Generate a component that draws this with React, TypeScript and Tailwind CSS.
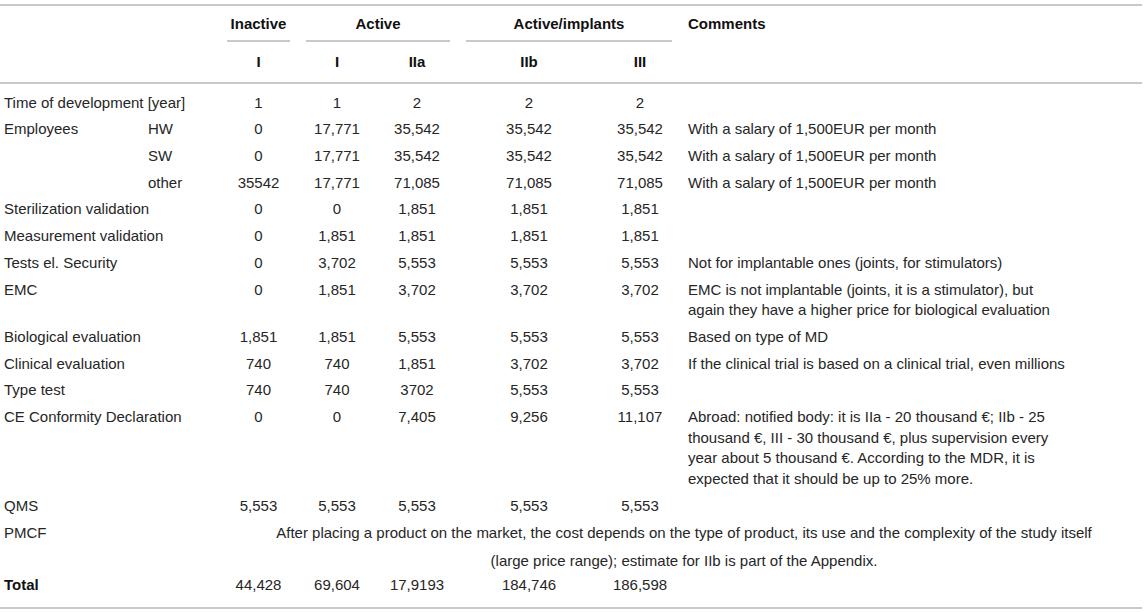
import React from "react";

const font = { fontFamily: '"Liberation Sans", Arial, Helvetica, sans-serif' };

type Row = {
  label: string;
  sub?: string;
  vals: string[];
  comment?: string[];
};

const rows: Row[] = [
  { label: "Time of development [year]", vals: ["1", "1", "2", "2", "2"] },
  { label: "Employees", sub: "HW", vals: ["0", "17,771", "35,542", "35,542", "35,542"], comment: ["With a salary of 1,500EUR per month"] },
  { label: "", sub: "SW", vals: ["0", "17,771", "35,542", "35,542", "35,542"], comment: ["With a salary of 1,500EUR per month"] },
  { label: "", sub: "other", vals: ["35542", "17,771", "71,085", "71,085", "71,085"], comment: ["With a salary of 1,500EUR per month"] },
  { label: "Sterilization validation", vals: ["0", "0", "1,851", "1,851", "1,851"] },
  { label: "Measurement validation", vals: ["0", "1,851", "1,851", "1,851", "1,851"] },
  { label: "Tests el. Security", vals: ["0", "3,702", "5,553", "5,553", "5,553"], comment: ["Not for implantable ones (joints, for stimulators)"] },
  {
    label: "EMC",
    vals: ["0", "1,851", "3,702", "3,702", "3,702"],
    comment: ["EMC is not implantable (joints, it is a stimulator), but", "again they have a higher price for biological evaluation"],
  },
  { label: "Biological evaluation", vals: ["1,851", "1,851", "5,553", "5,553", "5,553"], comment: ["Based on type of MD"] },
  { label: "Clinical evaluation", vals: ["740", "740", "1,851", "3,702", "3,702"], comment: ["If the clinical trial is based on a clinical trial, even millions"] },
  { label: "Type test", vals: ["740", "740", "3702", "5,553", "5,553"] },
  {
    label: "CE Conformity Declaration",
    vals: ["0", "0", "7,405", "9,256", "11,107"],
    comment: [
      "Abroad: notified body: it is IIa - 20 thousand €; IIb - 25",
      "thousand €, III - 30 thousand €, plus supervision every",
      "year about 5 thousand €. According to the MDR, it is",
      "expected that it should be up to 25% more.",
    ],
  },
  { label: "QMS", vals: ["5,553", "5,553", "5,553", "5,553", "5,553"] },
];

const cell = "align-top py-[3px] leading-[20.7px]";
const line = "border-[#c9c9c9]";

export default function App() {
  return (
    <div className="bg-white w-[1146px] h-[612px] overflow-hidden text-[15px] text-[#262626]" style={font}>
      <table className="mt-[4px] w-[1142px] table-fixed border-separate border-spacing-0">
        <colgroup>
          <col className="w-[140px]" />
          <col className="w-[79px]" />
          <col className="w-[79px]" />
          <col className="w-[78px]" />
          <col className="w-[82px]" />
          <col className="w-[142px]" />
          <col className="w-[80px]" />
          <col className="w-[462px]" />
        </colgroup>
        <thead className="font-bold text-[#111]">
          <tr>
            <th colSpan={2} className={`border-t-2 ${line}`}></th>
            <th className={`border-t-2 ${line} px-2 pt-[8px] align-top`}>
              <div className={`leading-[20px] pb-[6px] border-b-2 ${line}`}>Inactive</div>
            </th>
            <th colSpan={2} className={`border-t-2 ${line} px-2 pt-[8px] align-top`}>
              <div className={`leading-[20px] pb-[6px] border-b-2 ${line}`}>Active</div>
            </th>
            <th colSpan={2} className={`border-t-2 ${line} px-2 pt-[8px] align-top`}>
              <div className={`leading-[20px] pb-[6px] border-b-2 ${line}`}>Active/implants</div>
            </th>
            <th className={`border-t-2 ${line} pl-2 pt-[8px] align-top text-left`}>
              <div className="leading-[20px]">Comments</div>
            </th>
          </tr>
          <tr>
            <th colSpan={2} className={`border-b-2 ${line}`}></th>
            <th className={`border-b-2 ${line} py-[10px] leading-[20px]`}>I</th>
            <th className={`border-b-2 ${line} py-[10px] leading-[20px]`}>I</th>
            <th className={`border-b-2 ${line} py-[10px] leading-[20px]`}>IIa</th>
            <th className={`border-b-2 ${line} py-[10px] leading-[20px]`}>IIb</th>
            <th className={`border-b-2 ${line} py-[10px] leading-[20px]`}>III</th>
            <th className={`border-b-2 ${line}`}></th>
          </tr>
        </thead>
        <tbody>
          {rows.map((r, i) => {
            const pad = i === 0 ? "pt-[8.65px]" : "";
            return (
              <tr key={i}>
                {r.sub !== undefined ? (
                  <>
                    <td className={`${cell} ${pad} pl-[4px] whitespace-nowrap`}>{r.label}</td>
                    <td className={`${cell} ${pad} pl-[8px] whitespace-nowrap`}>{r.sub}</td>
                  </>
                ) : (
                  <td colSpan={2} className={`${cell} ${pad} pl-[4px] whitespace-nowrap`}>{r.label}</td>
                )}
                {r.vals.map((v, j) => (
                  <td key={j} className={`${cell} ${pad} text-center`}>{v}</td>
                ))}
                <td className={`${cell} ${pad} pl-2 whitespace-nowrap`}>
                  {(r.comment ?? []).map((c, k) => (
                    <div key={k}>{c}</div>
                  ))}
                </td>
              </tr>
            );
          })}
          <tr>
            <td colSpan={2} className={`${cell} pb-0 pl-[4px]`}>PMCF</td>
            <td colSpan={6} className={`${cell} pb-0 pl-[7px] text-center whitespace-nowrap`}>
              <div>After placing a product on the market, the cost depends on the type of product, its use and the complexity of the study itself</div>
              <div className="mt-[8px]">(large price range); estimate for IIb is part of the Appendix.</div>
            </td>
          </tr>
          <tr>
            <td colSpan={2} className={`${cell} pb-[11.35px] pl-[4px] font-bold text-[#111] border-b-2 ${line}`}>Total</td>
            {["44,428", "69,604", "17,9193", "184,746", "186,598"].map((v, j) => (
              <td key={j} className={`${cell} pb-[11.35px] text-center border-b-2 ${line}`}>{v}</td>
            ))}
            <td className={`${cell} pb-[11.35px] border-b-2 ${line}`}></td>
          </tr>
        </tbody>
      </table>
    </div>
  );
}
